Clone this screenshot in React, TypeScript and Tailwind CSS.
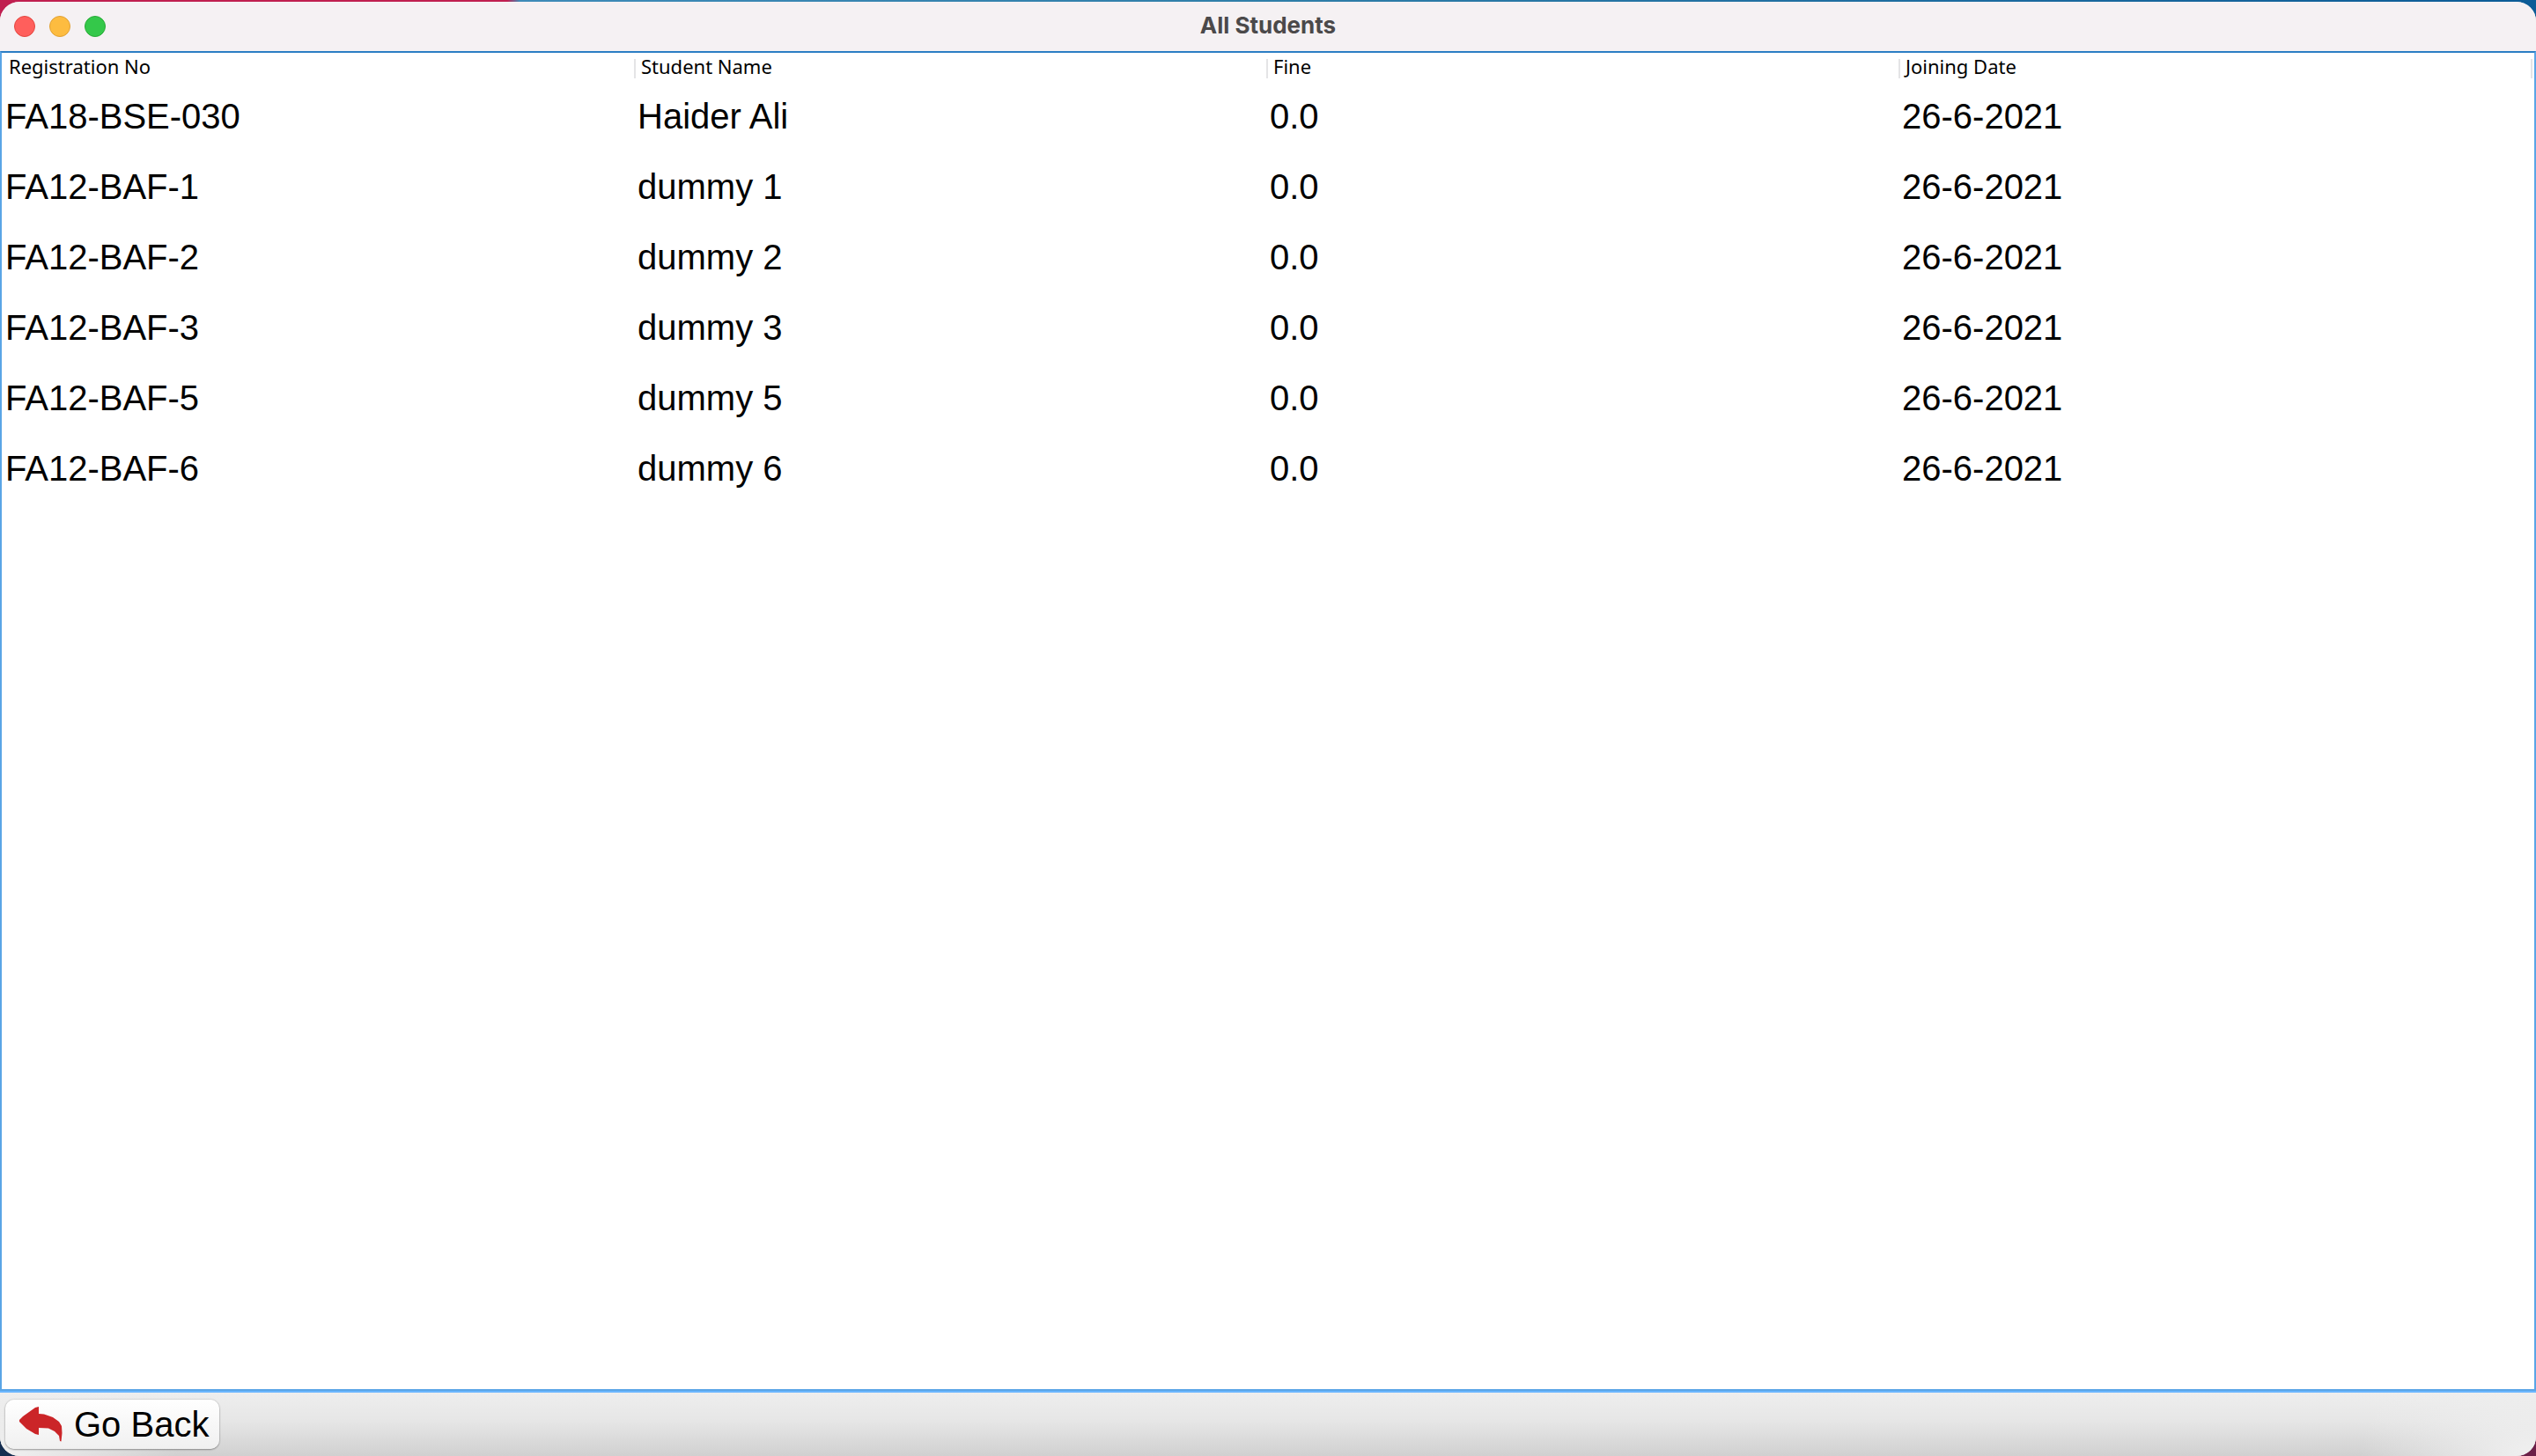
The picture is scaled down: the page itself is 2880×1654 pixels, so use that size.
const columns = ["Registration No", "Student Name", "Fine", "Joining Date"];

const students = [
  ["FA18-BSE-030", "Haider Ali", "0.0", "26-6-2021"],
  ["FA12-BAF-1", "dummy 1", "0.0", "26-6-2021"],
  ["FA12-BAF-2", "dummy 2", "0.0", "26-6-2021"],
  ["FA12-BAF-3", "dummy 3", "0.0", "26-6-2021"],
  ["FA12-BAF-5", "dummy 5", "0.0", "26-6-2021"],
  ["FA12-BAF-6", "dummy 6", "0.0", "26-6-2021"],
];

function TitleBar() {
  return (
    <header className="grid h-14 shrink-0 grid-cols-[1fr_auto_1fr] items-center bg-[#f5f1f3] px-4">
      <div className="flex gap-4">
        <button aria-label="Close" className="size-6 rounded-full border border-[#e2463f] bg-[#ff5f5c]" />
        <button aria-label="Minimize" className="size-6 rounded-full border border-[#e0a033] bg-[#fdbc40]" />
        <button aria-label="Zoom" className="size-6 rounded-full border border-[#27aa35] bg-[#34c84a]" />
      </div>
      <h1 className="pb-0.5 font-['Inter',sans-serif] text-[26px] leading-8 font-bold text-[#4b494a]">All Students</h1>
      <span />
    </header>
  );
}

function StudentTable() {
  return (
    <table className="w-full table-fixed border-collapse text-left text-black">
      <thead>
        <tr>
          {columns.map((name) => (
            <th key={name} className="h-8 p-0 align-middle font-['Noto_Sans',sans-serif] text-[22px] font-normal">
              <div className="mt-1 h-[22px] border-r-2 border-[#e4e4e6] pl-1.5 leading-4">{name}</div>
            </th>
          ))}
        </tr>
      </thead>
      <tbody>
        {students.map((row) => (
          <tr key={row[0]}>
            {row.map((value, i) => (
              <td key={i} className="h-20 p-0 pl-0.5 text-[40px] leading-[80px]">{value}</td>
            ))}
          </tr>
        ))}
      </tbody>
    </table>
  );
}

function BackIcon() {
  return (
    <svg viewBox="0 0 50 40" className="h-10 w-[50px]" fill="#cb2528" aria-hidden="true">
      <path d="M0 15 L4 11 L18 1 L22 0 V8 L28 8.500 L38 12 L45 17 L48 22 L48.500 30 L47.500 39.500 L46 39 L45 33 L40 28 L33 24.500 L22 24 V32 L18 31 L8 25 L0 17 Z" />
    </svg>
  );
}

export default function App() {
  return (
    <div className="flex h-screen flex-col bg-[linear-gradient(90deg,#c01f50_0%,#c01f50_20%,#3e8bb8_20.5%,#2f7ea8_50%,#0c5c97_100%),linear-gradient(90deg,#142d50_50%,#6b2048_50%)] bg-[size:100%_50%,100%_100%] bg-no-repeat pt-0.5 font-['Liberation_Sans',sans-serif]">
      <div className="flex flex-1 flex-col overflow-hidden rounded-[22px] bg-[#eeeeee]">
        <TitleBar />
        <main className="flex-1 border-x-2 border-t-2 border-b-2 border-x-[#5aa5e6] border-t-[#2b7dc4] border-b-[#5aa5e6] bg-white pr-0.5 pl-0.5">
          <StudentTable />
        </main>
        <footer className="border-t-2 border-[#6bb6ff] bg-[radial-gradient(200px_130px_at_100%_100%,#eeeeee_10%,#eeeeee00_100%),radial-gradient(200px_130px_at_0%_100%,#eeeeee_10%,#eeeeee00_100%),linear-gradient(180deg,#eeeeee_0%,#e6e6e6_45%,#d0d0d0_100%)] px-1.5 py-2">
          <button className="flex h-14 items-center gap-3 rounded-[10px] bg-linear-to-b from-white to-[#f0f0f0] pr-3 pl-4 text-[40px] leading-[56px] text-black shadow-[0_0_2px_rgba(0,0,0,0.25),0_1px_2px_rgba(0,0,0,0.3)]">
            <BackIcon />
            Go Back
          </button>
        </footer>
      </div>
    </div>
  );
}
